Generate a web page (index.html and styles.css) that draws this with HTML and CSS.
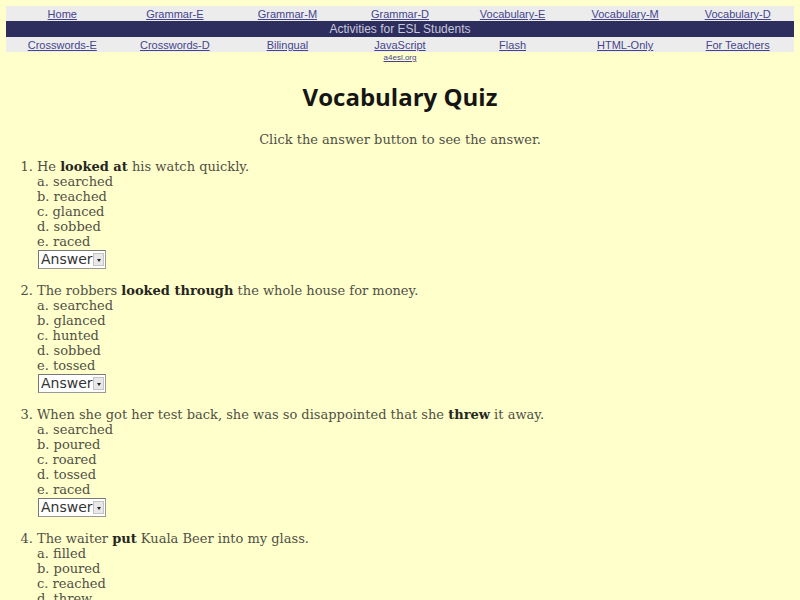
FILE: index.html
```html
<!DOCTYPE html>
<html>
<head>
<meta charset="utf-8">
<title>Vocabulary Quiz</title>
<link rel="stylesheet" href="styles.css">
</head>
<body>
<div class="nav">
  <div class="nav-row">
    <a href="#">Home</a>
    <a href="#">Grammar-E</a>
    <a href="#">Grammar-M</a>
    <a href="#">Grammar-D</a>
    <a href="#">Vocabulary-E</a>
    <a href="#">Vocabulary-M</a>
    <a href="#">Vocabulary-D</a>
  </div>
  <div class="nav-bar">Activities for ESL Students</div>
  <div class="nav-row">
    <a href="#">Crosswords-E</a>
    <a href="#">Crosswords-D</a>
    <a href="#">Bilingual</a>
    <a href="#">JavaScript</a>
    <a href="#">Flash</a>
    <a href="#">HTML-Only</a>
    <a href="#">For Teachers</a>
  </div>
  <div class="site"><a href="#">a4esl.org</a></div>
</div>

<h1 class="title">Vocabulary Quiz</h1>
<p class="intro">Click the answer button to see the answer.</p>

<ol class="quiz">
  <li>
    <div class="q">He <b>looked at</b> his watch quickly.</div>
    <div class="opt">a. searched</div>
    <div class="opt">b. reached</div>
    <div class="opt">c. glanced</div>
    <div class="opt">d. sobbed</div>
    <div class="opt">e. raced</div>
    <span class="ans"><select><option>Answer</option><option>c. glanced</option></select></span>
  </li>
  <li>
    <div class="q">The robbers <b>looked through</b> the whole house for money.</div>
    <div class="opt">a. searched</div>
    <div class="opt">b. glanced</div>
    <div class="opt">c. hunted</div>
    <div class="opt">d. sobbed</div>
    <div class="opt">e. tossed</div>
    <span class="ans"><select><option>Answer</option><option>a. searched</option></select></span>
  </li>
  <li>
    <div class="q">When she got her test back, she was so disappointed that she <b>threw</b> it away.</div>
    <div class="opt">a. searched</div>
    <div class="opt">b. poured</div>
    <div class="opt">c. roared</div>
    <div class="opt">d. tossed</div>
    <div class="opt">e. raced</div>
    <span class="ans"><select><option>Answer</option><option>d. tossed</option></select></span>
  </li>
  <li>
    <div class="q">The waiter <b>put</b> Kuala Beer into my glass.</div>
    <div class="opt">a. filled</div>
    <div class="opt">b. poured</div>
    <div class="opt">c. reached</div>
    <div class="opt">d. threw</div>
    <div class="opt">e. raced</div>
    <span class="ans"><select><option>Answer</option><option>b. poured</option></select></span>
  </li>
</ol>
</body>
</html>
```
FILE: styles.css
```css
html, body {
  margin: 0;
  padding: 0;
  background: #ffffcc;
}
body {
  font-family: "DejaVu Serif", serif;
  font-size: 13px;
  color: #505046;
}
.nav {
  padding: 6px 6px 0;
  font-family: "Liberation Sans", Arial, sans-serif;
}
.nav-row {
  display: grid;
  grid-template-columns: repeat(7, 1fr);
  background: #ececec;
  height: 15px;
  align-items: center;
  font-size: 11px;
  line-height: 15px;
  text-align: center;
  padding-top: 1px;
  box-sizing: border-box;
}
.nav-row a,
.site a {
  color: #45458c;
  text-decoration: underline;
}
.nav-bar {
  background: #2d2d5e;
  color: #c9c9dc;
  height: 16px;
  line-height: 16px;
  font-size: 12px;
  text-align: center;
}
.site {
  text-align: center;
  font-size: 8px;
  line-height: 10px;
  padding-top: 1px;
}
.title {
  font-family: "Open Sans", "DejaVu Sans", sans-serif;
  font-weight: bold;
  font-size: 24px;
  line-height: 28px;
  color: #151515;
  text-align: center;
  margin: 20px 0 0;
}
.intro {
  text-align: center;
  line-height: 15px;
  margin: 21px 0 0;
}
.quiz {
  margin: 12px 0 0;
  padding-left: 37px;
  line-height: 15px;
}
.quiz li {
  margin-bottom: 14px;
}
.quiz b {
  color: #262620;
}
.ans {
  position: relative;
  display: inline-block;
  margin: 1px 0 0 1px;
  vertical-align: top;
}
.ans select {
  appearance: none;
  -webkit-appearance: none;
  font-family: "DejaVu Sans", sans-serif;
  font-size: 14px;
  color: #333;
  background: #fff;
  border: 1px solid #999;
  border-top-color: #777;
  border-left-color: #777;
  border-radius: 0;
  height: 19px;
  width: 68px;
  padding: 0 0 0 2px;
  margin: 0;
  line-height: 17px;
}
.ans::after {
  content: "";
  position: absolute;
  right: 2px;
  top: 3px;
  width: 11px;
  height: 13px;
  background: #e8e8e8;
  border: 1px solid #c4c4c4;
  box-sizing: border-box;
  pointer-events: none;
}
.ans::before {
  content: "";
  position: absolute;
  right: 5px;
  top: 9px;
  border-left: 2.5px solid transparent;
  border-right: 2.5px solid transparent;
  border-top: 3px solid #222;
  z-index: 1;
  pointer-events: none;
}
```
